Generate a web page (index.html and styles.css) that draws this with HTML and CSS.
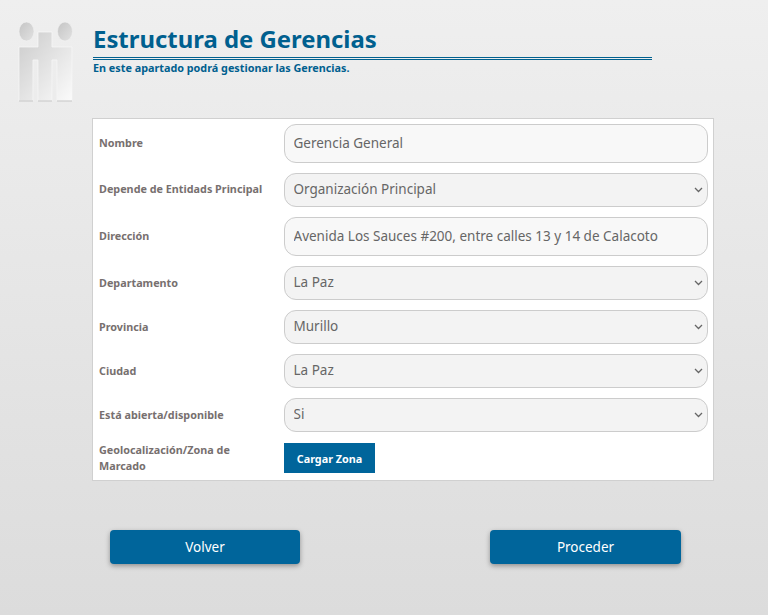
FILE: index.html
```html
<!DOCTYPE html>
<html lang="es">
<head>
<meta charset="utf-8">
<title>Estructura de Gerencias</title>
<link rel="stylesheet" href="styles.css">
</head>
<body>
<header class="header">
  <svg class="logo" width="58" height="82" viewBox="0 0 58 82" aria-hidden="true">
    <defs>
      <linearGradient id="body" x1="0" y1="0" x2="1" y2="1">
        <stop offset="0" stop-color="#cbcbcb"/>
        <stop offset="1" stop-color="#fbfbfb"/>
      </linearGradient>
      <linearGradient id="head" x1="0" y1="0" x2="1" y2="1">
        <stop offset="0" stop-color="#c4c4c4"/>
        <stop offset="1" stop-color="#e2e2e2"/>
      </linearGradient>
    </defs>
    <ellipse cx="9.5" cy="11.5" rx="7.5" ry="9.5" fill="url(#head)" stroke="#f2f2f2" stroke-width="0.6"/>
    <ellipse cx="48" cy="11.5" rx="7.5" ry="9.5" fill="url(#head)" stroke="#f2f2f2" stroke-width="0.6"/>
    <path d="M21 12H35V27H55V81H40V40H35V81H21V40H16V81H2V27H21Z" fill="url(#body)" stroke="#f6f6f6" stroke-width="0.8"/>
    <path d="M2 81H16M21 81H35M40 81H55" fill="none" stroke="#c4c4c4" stroke-width="1"/>
  </svg>
  <div class="heading">
    <h1 class="title">Estructura de Gerencias</h1>
    <p class="subtitle">En este apartado podrá gestionar las Gerencias.</p>
  </div>
</header>
<main class="card">
  <form class="form">
    <label class="label raised">Nombre</label>
    <input class="field tall" type="text" value="Gerencia General">
    <label class="label raised">Depende de Entidads Principal</label>
    <select class="field choice"><option>Organización Principal</option></select>
    <label class="label raised">Dirección</label>
    <input class="field tall" type="text" value="Avenida Los Sauces #200, entre calles 13 y 14 de Calacoto">
    <label class="label">Departamento</label>
    <select class="field choice"><option>La Paz</option></select>
    <label class="label">Provincia</label>
    <select class="field choice"><option>Murillo</option></select>
    <label class="label">Ciudad</label>
    <select class="field choice"><option>La Paz</option></select>
    <label class="label">Está abierta/disponible</label>
    <select class="field choice"><option>Si</option></select>
    <label class="label geo">Geolocalización/Zona de Marcado</label>
    <div><button class="load" type="button">Cargar Zona</button></div>
  </form>
</main>
<footer class="actions">
  <button class="action" type="button">Volver</button>
  <button class="action" type="button">Proceder</button>
</footer>
</body>
</html>
```
FILE: styles.css
```css
* { box-sizing: border-box; }
html, body { height: 100%; }
body {
  margin: 0;
  height: 615px;
  overflow: hidden;
  font-family: "Noto Sans", "Open Sans", sans-serif;
  background: linear-gradient(#efefef, #dcdcdc);
}
.header {
  display: flex;
  height: 118px;
  padding: 20px 0 0 17px;
}
.logo { flex: none; margin-right: 18px; }
.heading { width: 559px; padding-top: 3px; }
.title {
  margin: 0;
  font-size: 23.9px;
  line-height: 32px;
  font-weight: 700;
  color: #00608f;
  border-bottom: 3px double #00608f;
  height: 37px;
}
.subtitle {
  margin: 1px 0 0;
  font-size: 10.8px;
  line-height: 14px;
  font-weight: 700;
  color: #00608f;
}
.card {
  width: 622px;
  height: 363px;
  margin-left: 92px;
  padding: 5px 5px 0 6px;
  background: #fff;
  border: 1px solid #d0d0d0;
}
.form {
  display: grid;
  grid-template-columns: 185px 424px;
  row-gap: 10px;
  align-items: center;
}
.label {
  font-size: 10.8px;
  line-height: 16px;
  font-weight: 700;
  color: #77706f;
}
.raised { margin-bottom: 2px; }
.geo { width: 150px; }
.field {
  display: block;
  width: 424px;
  height: 34px;
  padding: 0 5px 2px 8.5px;
  font-family: inherit;
  font-size: 13.5px;
  color: #666;
  background-color: #f3f3f3;
  border: 1px solid #ccc;
  border-radius: 12px;
  outline: none;
}
.choice {
  appearance: none;
  background-image: url("data:image/svg+xml,%3Csvg xmlns='http://www.w3.org/2000/svg' width='9' height='6' viewBox='0 0 9 6'%3E%3Cpath d='M1 1l3.5 3.5L8 1' fill='none' stroke='%23666' stroke-width='1.3'/%3E%3C/svg%3E");
  background-repeat: no-repeat;
  background-position: right 4px center;
}
.tall { height: 39px; background-color: #f8f8f8; }
.load {
  display: block;
  width: 91px;
  height: 30px;
  padding: 0;
  font-family: inherit;
  font-size: 10.8px;
  font-weight: 700;
  color: #fff;
  background: #00659b;
  border: 0;
}
.actions {
  display: grid;
  grid-template-columns: 190px 191px;
  column-gap: 190px;
  margin: 49px 0 0 110px;
}
.action {
  height: 34px;
  padding: 0;
  font-family: inherit;
  font-size: 13.5px;
  color: #fff;
  background: #00659b;
  border: 0;
  border-radius: 4px;
  box-shadow: 0 2px 5px rgba(0, 0, 0, 0.35);
}
```
